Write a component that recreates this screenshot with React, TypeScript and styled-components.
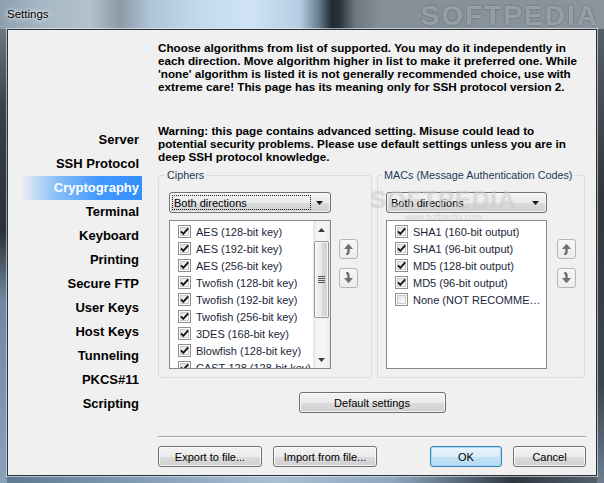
import React from "react";
import styled, { createGlobalStyle, css } from "styled-components";

const GlobalStyle = createGlobalStyle`
  html, body {
    margin: 0;
    padding: 0;
  }
  body {
    width: 604px;
    height: 483px;
    overflow: hidden;
    font-family: "Liberation Sans", Arial, sans-serif;
  }
  * {
    box-sizing: border-box;
  }
`;

const NAV_ITEMS = [
  "Server",
  "SSH Protocol",
  "Cryptography",
  "Terminal",
  "Keyboard",
  "Printing",
  "Secure FTP",
  "User Keys",
  "Host Keys",
  "Tunneling",
  "PKCS#11",
  "Scripting",
];

const CIPHERS = [
  "AES (128-bit key)",
  "AES (192-bit key)",
  "AES (256-bit key)",
  "Twofish (128-bit key)",
  "Twofish (192-bit key)",
  "Twofish (256-bit key)",
  "3DES (168-bit key)",
  "Blowfish (128-bit key)",
  "CAST-128 (128-bit key)",
];

const MACS = [
  { name: "SHA1 (160-bit output)", on: true },
  { name: "SHA1 (96-bit output)", on: true },
  { name: "MD5 (128-bit output)", on: true },
  { name: "MD5 (96-bit output)", on: true },
  { name: "None (NOT RECOMMENDED)", on: false },
];

function CheckBox({ checked }: { checked: boolean }) {
  return (
    <svg width="13" height="13" viewBox="0 0 13 13" style={{ flex: "none" }}>
      <defs>
        <linearGradient id="cbg" x1="0" y1="0" x2="1" y2="1">
          <stop offset="0" stopColor="#e2e2e2" />
          <stop offset="1" stopColor="#ffffff" />
        </linearGradient>
      </defs>
      <rect x="0.5" y="0.5" width="12" height="12" fill="#fff" stroke="#8e8f8f" />
      <rect x="2.5" y="2.5" width="8" height="8" fill="url(#cbg)" stroke="#c6cbd0" />
      {checked && (
        <path
          d="M3 6.4 L5.3 8.8 L10.2 3.4"
          fill="none"
          stroke="#151515"
          strokeWidth="1.9"
        />
      )}
    </svg>
  );
}

function MoveIcon({ down }: { down?: boolean }) {
  return (
    <svg width="11" height="12" viewBox="0 0 11 12">
      {down ? (
        <>
          <path d="M3.2 0.8 Q5.5 1 5.5 3.6 V7" fill="none" stroke="#6f6f6f" strokeWidth="2.4" />
          <path d="M1 6 L10 6 L5.5 11.2 Z" fill="#6f6f6f" />
        </>
      ) : (
        <>
          <path d="M1 6 L10 6 L5.5 0.8 Z" fill="#6f6f6f" />
          <path d="M5.5 5 V8.4 Q5.5 11 3.2 11.2" fill="none" stroke="#6f6f6f" strokeWidth="2.4" />
        </>
      )}
    </svg>
  );
}

function Tri({ up, color = "#1a1a1a" }: { up?: boolean; color?: string }) {
  return (
    <svg width="7" height="4" viewBox="0 0 7 4">
      <path d={up ? "M0 4 L7 4 L3.5 0 Z" : "M0 0 L7 0 L3.5 4 Z"} fill={color} />
    </svg>
  );
}

export default function App() {
  return (
    <>
      <GlobalStyle />
      <Window>
        <TitleBar>
          <TitleText>Settings</TitleText>
          <Watermark>SOFTPEDIA</Watermark>
        </TitleBar>
        <Frame>
          <Client>
            <Nav>
              {NAV_ITEMS.map((n) => (
                <NavItem key={n} $active={n === "Cryptography"}>
                  {n}
                </NavItem>
              ))}
            </Nav>
            <Main>
              <Para>
                Choose algorithms from list of supported. You may do it independently in
                <br />
                each direction. Move algorithm higher in list to make it preferred one. While
                <br />
                'none' algorithm is listed it is not generally recommended choice, use with
                <br />
                extreme care! This page has its meaning only for SSH protocol version 2.
              </Para>
              <Para $gap={31}>
                Warning: this page contains advanced setting. Misuse could lead to
                <br />
                potential security problems. Please use default settings unless you are in
                <br />
                deep SSH protocol knowledge.
              </Para>

              <GroupRow>
                <Group $width={214} $inset={10} $right={13}>
                  <Legend>Ciphers</Legend>
                  <GroupBody>
                    <ListColumn $w={162}>
                      <Dropdown>
                        <DropText $focused>Both directions</DropText>
                        <DropArrow>
                          <Tri />
                        </DropArrow>
                      </Dropdown>
                      <ListBox>
                        <Items>
                          {CIPHERS.map((c) => (
                            <Item key={c}>
                              <CheckBox checked />
                              <ItemLabel>{c}</ItemLabel>
                            </Item>
                          ))}
                        </Items>
                        <ScrollBar>
                          <ScrollArrow>
                            <Tri up color="#3c3c3c" />
                          </ScrollArrow>
                          <Thumb>
                            <Grip />
                            <Grip />
                            <Grip />
                            <Grip />
                          </Thumb>
                          <ScrollTrack />
                          <ScrollArrow>
                            <Tri color="#3c3c3c" />
                          </ScrollArrow>
                        </ScrollBar>
                      </ListBox>
                    </ListColumn>
                    <MoveColumn $gap={8}>
                      <MoveButton>
                        <MoveIcon />
                      </MoveButton>
                      <MoveButton>
                        <MoveIcon down />
                      </MoveButton>
                    </MoveColumn>
                  </GroupBody>
                </Group>

                <Group $width={208} $inset={8} $right={8}>
                  <Legend>MACs (Message Authentication Codes)</Legend>
                  <GroupBody>
                    <ListColumn $w={161}>
                      <Dropdown>
                        <DropText>Both directions</DropText>
                        <DropArrow>
                          <Tri />
                        </DropArrow>
                      </Dropdown>
                      <ListBox>
                        <Items>
                          {MACS.map((m) => (
                            <Item key={m.name}>
                              <CheckBox checked={m.on} />
                              <ItemLabel>{m.name}</ItemLabel>
                            </Item>
                          ))}
                        </Items>
                      </ListBox>
                    </ListColumn>
                    <MoveColumn $gap={10}>
                      <MoveButton>
                        <MoveIcon />
                      </MoveButton>
                      <MoveButton>
                        <MoveIcon down />
                      </MoveButton>
                    </MoveColumn>
                  </GroupBody>
                </Group>
              </GroupRow>

              <DefaultButton $w={147}>Default settings</DefaultButton>

              <Separator />
              <ButtonRow>
                <Button $w={104}>Export to file...</Button>
                <Button $w={104}>Import from file...</Button>
                <Spacer />
                <Button $w={72} $primary>
                  OK
                </Button>
                <Button $w={73}>Cancel</Button>
              </ButtonRow>
            </Main>
            <Stamp>
              <StampBig>SOFTPEDIA</StampBig>
              <StampSmall>www.softpedia.com</StampSmall>
            </Stamp>
          </Client>
        </Frame>
      </Window>
    </>
  );
}

const Window = styled.div`
  width: 604px;
  height: 483px;
  display: flex;
  flex-direction: column;
  background:
    linear-gradient(to bottom, #7d8c99 0%, #3a4147 22%, #2c3136 48%, #6f88a0 62%, #88a2ba 100%) left top / 7px 100% no-repeat,
    linear-gradient(to bottom, #5b6670 0%, #2f363d 40%, #3a4550 80%, #6d7f90 100%) right top / 7px 100% no-repeat,
    linear-gradient(to right, #5d7791 0%, #7e98b1 20%, #a9bfd3 45%, #8fa8bf 65%, #2d3740 85%, #56636f 100%);
`;

const TitleBar = styled.div`
  position: relative;
  height: 29px;
  flex: none;
  display: flex;
  align-items: center;
  padding: 0 0 2px 7px;
  overflow: hidden;
  background: linear-gradient(
    to right,
    #8ea0b0 0,
    #a5b6c4 40px,
    #b4c2cd 90px,
    #8d9aa5 120px,
    #aec4d8 150px,
    #c3d9ee 200px,
    #cfe3f5 250px,
    #b5cde4 300px,
    #6d8093 318px,
    #1f2a33 332px,
    #2a343d 340px,
    #6c7780 355px,
    #858f98 380px,
    #8b959d 604px
  );
`;

const TitleText = styled.span`
  position: relative;
  z-index: 1;
  font-size: 11.5px;
  color: #000;
  text-shadow: 0 0 6px #fff, 0 0 3px rgba(255, 255, 255, 0.9);
`;

const Watermark = styled.span`
  position: absolute;
  right: 5px;
  top: 0px;
  font-size: 28px;
  font-weight: bold;
  letter-spacing: 2px;
  color: rgba(200, 207, 214, 0.55);
  text-shadow: 0 0 2px rgba(40, 48, 56, 0.55);
  filter: blur(0.7px);
`;

const Frame = styled.div`
  flex: 1;
  min-height: 0;
  display: flex;
  padding: 0 7px 7px 7px;
`;

const Client = styled.div`
  position: relative;
  flex: 1;
  display: flex;
  background: #f0f0f0;
  border: 1px solid #2b3035;
  box-shadow: 0 0 0 1px rgba(235, 242, 248, 0.6);
`;

const Stamp = styled.div`
  position: absolute;
  left: 362px;
  top: 158px;
  display: flex;
  flex-direction: column;
  align-items: center;
  pointer-events: none;
`;

const StampBig = styled.span`
  font-size: 24px;
  font-weight: bold;
  letter-spacing: 1px;
  line-height: 24px;
  color: rgba(255, 255, 255, 0.35);
  text-shadow: 0 0 1px rgba(120, 120, 120, 0.35);
`;

const StampSmall = styled.span`
  font-size: 9px;
  line-height: 10px;
  color: rgba(150, 150, 150, 0.35);
`;

const Nav = styled.div`
  width: 142px;
  flex: none;
  display: flex;
  flex-direction: column;
  padding-top: 98px;
`;

const NavItem = styled.div<{ $active?: boolean }>`
  height: 24px;
  width: 122px;
  margin-left: 12px;
  padding-right: 3px;
  text-align: right;
  line-height: 24px;
  font-size: 13px;
  font-weight: bold;
  color: #000;
  white-space: nowrap;
  ${(p) =>
    p.$active &&
    css`
      color: #fff;
      background: linear-gradient(
        to right,
        rgba(51, 150, 255, 0) 0%,
        rgba(51, 150, 255, 0.55) 30%,
        #4298ff 65%,
        #3390ff 100%
      );
    `}
`;

const Main = styled.div`
  flex: 1;
  min-width: 0;
  display: flex;
  flex-direction: column;
  padding: 11px 10px 8px 8px;
`;

const Para = styled.p<{ $gap?: number }>`
  margin: ${(p) => p.$gap ?? 0}px 0 0 0;
  font-size: 11.7px;
  font-weight: bold;
  line-height: 13px;
  color: #000;
  white-space: nowrap;
`;

const GroupRow = styled.div`
  display: flex;
  gap: 5px;
  margin-top: 5px;
`;

const Group = styled.fieldset<{ $width: number; $inset: number; $right: number }>`
  width: ${(p) => p.$width}px;
  min-width: 0;
  margin: 0;
  padding: 10px ${(p) => p.$right}px 8px ${(p) => p.$inset}px;
  border: 1px solid #d5dfe5;
  border-radius: 3px;
`;

const Legend = styled.legend`
  margin-left: -4px;
  padding: 0 2px;
  font-size: 10.8px;
  line-height: 14px;
  color: #1e395b;
  white-space: nowrap;
`;

const GroupBody = styled.div`
  display: flex;
  align-items: flex-start;
`;

const ListColumn = styled.div<{ $w: number }>`
  width: ${(p) => p.$w}px;
  flex: none;
  display: flex;
  flex-direction: column;
  gap: 7px;
`;

const Dropdown = styled.div`
  height: 21px;
  display: flex;
  align-items: center;
  padding: 2px;
  border: 1px solid #707070;
  border-radius: 3px;
  background: linear-gradient(#f2f2f2 0%, #ebebeb 50%, #dddddd 50%, #cfcfcf 100%);
  box-shadow: inset 0 0 0 1px rgba(255, 255, 255, 0.7);
`;

const DropText = styled.div<{ $focused?: boolean }>`
  flex: 1;
  height: 15px;
  display: flex;
  align-items: center;
  padding-left: 1px;
  font-size: 11px;
  color: #000;
  border: 1px dotted ${(p) => (p.$focused ? "#222" : "transparent")};
`;

const DropArrow = styled.div`
  width: 17px;
  display: flex;
  align-items: center;
  justify-content: center;
`;

const ListBox = styled.div`
  height: 149px;
  display: flex;
  overflow: hidden;
  border: 1px solid #828790;
  background: #fff;
`;

const Items = styled.div`
  flex: 1;
  min-width: 0;
  padding-top: 2px;
  overflow: hidden;
`;

const Item = styled.div`
  height: 17px;
  display: flex;
  align-items: center;
  gap: 5px;
  padding-left: 8px;
  font-size: 11px;
  color: #1a1f3a;
  white-space: nowrap;
`;

const ItemLabel = styled.span`
  max-width: 131px;
  overflow: hidden;
  text-overflow: ellipsis;
`;

const ScrollBar = styled.div`
  width: 17px;
  flex: none;
  display: flex;
  flex-direction: column;
  background: linear-gradient(to right, #e4e4e4, #f4f4f4 25%, #f4f4f4 75%, #e9e9e9);
`;

const ScrollArrow = styled.div`
  height: 17px;
  flex: none;
  display: flex;
  align-items: center;
  justify-content: center;
`;

const Thumb = styled.div`
  height: 77px;
  margin: 3px 1px 0 1px;
  display: flex;
  flex-direction: column;
  align-items: center;
  justify-content: center;
  gap: 1px;
  border: 1px solid #979797;
  border-radius: 2px;
  background: linear-gradient(to right, #f4f4f4 0%, #e8e8e8 50%, #d9d9d9 50%, #d2d2d2 100%);
  box-shadow: inset 0 0 0 1px rgba(255, 255, 255, 0.8);
`;

const Grip = styled.div`
  width: 7px;
  height: 1px;
  background: #555;
`;

const ScrollTrack = styled.div`
  flex: 1;
`;

const MoveColumn = styled.div<{ $gap: number }>`
  margin-left: ${(p) => p.$gap}px;
  margin-top: 47px;
  display: flex;
  flex-direction: column;
  gap: 9px;
`;

const MoveButton = styled.div`
  width: 19px;
  height: 20px;
  display: flex;
  align-items: center;
  justify-content: center;
  border: 1px solid #b5b5b5;
  border-radius: 3px;
  background: linear-gradient(#f7f7f7, #ececec);
`;

const Button = styled.button<{ $w: number; $primary?: boolean }>`
  width: ${(p) => p.$w}px;
  height: 21px;
  flex: none;
  padding: 0;
  font-family: "Liberation Sans", Arial, sans-serif;
  font-size: 11px;
  color: #000;
  border: 1px solid #707070;
  border-radius: 3px;
  background: linear-gradient(#f2f2f2 0%, #ebebeb 50%, #dddddd 50%, #cfcfcf 100%);
  box-shadow: inset 0 0 0 1px rgba(255, 255, 255, 0.75);
  ${(p) =>
    p.$primary &&
    css`
      border-color: #3c7fb1;
      background: linear-gradient(#e8f4fb 0%, #d9edf9 50%, #c4e3f6 50%, #b6dbf2 100%);
      box-shadow: inset 0 0 0 1px #a2ddf8;
    `}
`;

const DefaultButton = styled(Button)`
  align-self: center;
  margin-top: 14px;
`;

const Separator = styled.div`
  margin-top: auto;
  height: 2px;
  border-top: 1px solid #a0a0a0;
  border-bottom: 1px solid #ffffff;
`;

const ButtonRow = styled.div`
  display: flex;
  gap: 11px;
  margin-top: 8px;
`;

const Spacer = styled.div`
  flex: 1;
`;
